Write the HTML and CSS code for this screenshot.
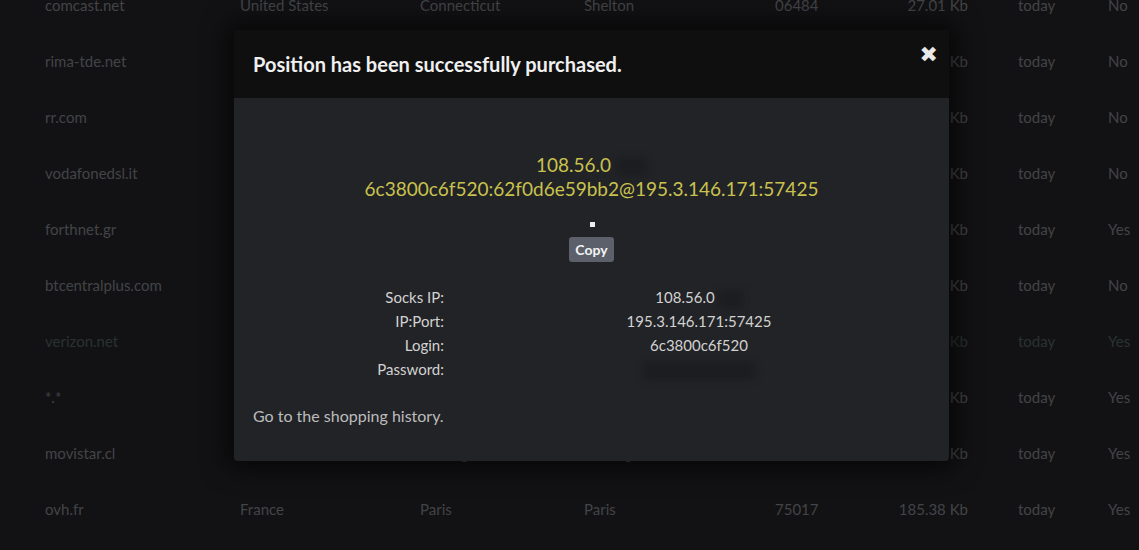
FILE: index.html
```html
<!DOCTYPE html>
<html>
<head>
<meta charset="utf-8">
<link rel="stylesheet" href="styles.css">
</head>
<body>
<div class="table">
  <div class="row"><span>comcast.net</span><span>United States</span><span>Connecticut</span><span>Shelton</span><span>06484</span><span class="size">27.01 Kb</span><span>today</span><span>No</span></div>
  <div class="row"><span>rima-tde.net</span><span>Spain</span><span>Madrid</span><span>Madrid</span><span>28001</span><span class="size">31.20 Kb</span><span>today</span><span>No</span></div>
  <div class="row"><span>rr.com</span><span>United States</span><span>Texas</span><span>Austin</span><span>78701</span><span class="size">44.18 Kb</span><span>today</span><span>No</span></div>
  <div class="row"><span>vodafonedsl.it</span><span>Italy</span><span>Lazio</span><span>Rome</span><span>00118</span><span class="size">12.40 Kb</span><span>today</span><span>No</span></div>
  <div class="row"><span>forthnet.gr</span><span>Greece</span><span>Attica</span><span>Athens</span><span>10431</span><span class="size">63.05 Kb</span><span>today</span><span>Yes</span></div>
  <div class="row"><span>btcentralplus.com</span><span>United Kingdom</span><span>England</span><span>London</span><span>EC1A</span><span class="size">18.72 Kb</span><span>today</span><span>No</span></div>
  <div class="row dim"><span>verizon.net</span><span>United States</span><span>New York</span><span>New York</span><span>10001</span><span class="size">52.33 Kb</span><span>today</span><span>Yes</span></div>
  <div class="row"><span>*.*</span><span>Germany</span><span>Hesse</span><span>Frankfurt</span><span>60311</span><span class="size">90.14 Kb</span><span>today</span><span>Yes</span></div>
  <div class="row"><span>movistar.cl</span><span>Chile</span><span>Santiago</span><span>Santiago</span><span>83200</span><span class="size">26.91 Kb</span><span>today</span><span>Yes</span></div>
  <div class="row"><span>ovh.fr</span><span>France</span><span>Paris</span><span>Paris</span><span>75017</span><span class="size">185.38 Kb</span><span>today</span><span>Yes</span></div>
</div>

<div class="modal">
  <div class="modal-head">
    <h2 class="title">Position has been successfully purchased.</h2>
    <span class="close">&#x2716;</span>
  </div>
  <div class="modal-body">
    <div class="proxy">
      <div>108.56.0<span class="mask mask-a"></span></div>
      <div>6c3800c6f520:62f0d6e59bb2@195.3.146.171:57425</div>
    </div>
    <div class="dot"></div>
    <button class="copy">Copy</button>
    <div class="info">
      <span class="label">Socks IP:</span><span class="value">108.56.0<span class="mask mask-b"></span></span>
      <span class="label">IP:Port:</span><span class="value">195.3.146.171:57425</span>
      <span class="label">Login:</span><span class="value">6c3800c6f520</span>
      <span class="label">Password:</span><span class="value"><span class="mask mask-c"></span></span>
    </div>
    <div class="history">Go to the shopping history.</div>
  </div>
</div>
</body>
</html>
```

FILE: styles.css
```css
html, body {
  margin: 0;
  padding: 0;
  background: #121214;
  height: 550px;
  overflow: hidden;
  font-family: Lato, "Open Sans", sans-serif;
}

.table {
  margin-top: -23px;
  padding-left: 45px;
}

.row {
  display: grid;
  grid-template-columns: 195px 180px 164px 191px 95px 98px 50px 90px 1fr;
  height: 56px;
  align-items: center;
  font-size: 15px;
  color: #434447;
}

.row .size {
  text-align: right;
  grid-column: 6;
}

.row span:nth-child(7) { grid-column: 8; }
.row span:nth-child(8) { grid-column: 9; }

.row.dim { color: #2a3231; }

.modal {
  position: absolute;
  left: 234px;
  top: 30px;
  width: 715px;
  height: 431px;
  border-radius: 4px;
  overflow: hidden;
  background: #222326;
  box-shadow: 0 0 24px 8px rgba(0,0,0,0.6);
  display: flex;
  flex-direction: column;
}

.modal-head {
  background: #0f0f10;
  height: 68px;
  display: flex;
  align-items: center;
  justify-content: space-between;
  padding: 0 11px 6px 19px;
  box-sizing: border-box;
}

.title {
  margin: 0;
  font-size: 20px;
  font-weight: 700;
  color: #f0f0f0;
  padding-top: 6px;
}

.close {
  color: #e8e8e8;
  font-size: 22px;
  line-height: 1;
  font-family: "DejaVu Sans", sans-serif;
  font-weight: bold;
  margin-top: -12px;
}

.modal-body {
  flex: 1;
  display: flex;
  flex-direction: column;
  align-items: center;
  padding-top: 55px;
}

.proxy {
  text-align: center;
  color: #c9c24e;
  font-size: 19px;
  line-height: 24px;
}

.mask {
  display: inline-block;
  background: #1c1d20;
  vertical-align: middle;
  filter: blur(3px);
}
.mask-a { width: 30px; height: 18px; margin-left: 6px; }
.mask-b { width: 24px; height: 18px; margin-left: 4px; }
.mask-c { width: 112px; height: 18px; }

.dot {
  width: 5px;
  height: 5px;
  background: #ededed;
  margin-top: 21px;
  margin-left: 1px;
}

.copy {
  margin-top: 10px;
  background: #5b606b;
  color: #f4f4f4;
  border: none;
  border-radius: 3px;
  font-family: inherit;
  font-size: 14px;
  font-weight: 700;
  padding: 0 6px;
  height: 25px;
}

.info {
  align-self: flex-start;
  display: grid;
  grid-template-columns: 150px 400px;
  column-gap: 55px;
  margin-top: 23px;
  margin-left: 60px;
  font-size: 15px;
  line-height: 24px;
  color: #d2d2d2;
}

.info .label { text-align: right; }
.info .value { text-align: center; }

.history {
  align-self: flex-start;
  margin-left: 19px;
  margin-top: 25px;
  font-size: 16px;
  color: #bcbcbc;
}
```
